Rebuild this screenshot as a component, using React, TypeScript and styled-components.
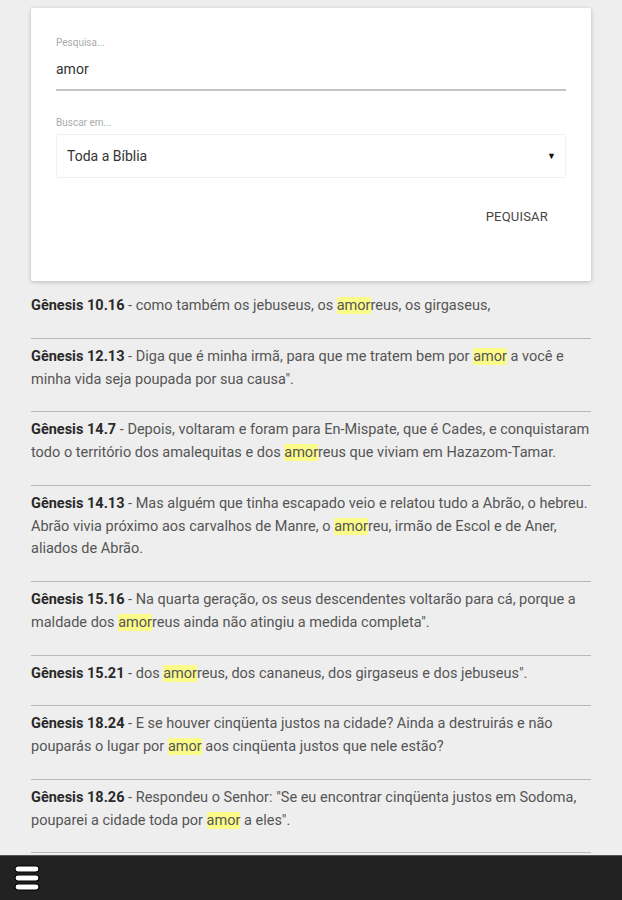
import React from "react";
import styled, { createGlobalStyle } from "styled-components";

const GlobalStyle = createGlobalStyle`
  html, body {
    margin: 0;
    padding: 0;
    background-color: #eeeeee;
    font-family: Roboto, "Liberation Sans", Arial, sans-serif;
  }
`;

const Page = styled.div`
  padding: 8px 31px 60px;
  display: flex;
  flex-direction: column;
`;

const Card = styled.div`
  background-color: #fff;
  box-shadow: 0 1px 4px 0 rgb(0 0 0 / 22%);
  border-radius: 2px;
  padding: 29px 25px 56px;
  display: flex;
  flex-direction: column;
`;

const Label = styled.label`
  font-size: 10px;
  color: #aaa;
  line-height: 12px;
`;

const SearchInput = styled.input`
  border: none;
  outline: none;
  border-bottom: 2px solid #c4c4c4;
  font-family: inherit;
  font-size: 14px;
  color: #333;
  padding: 12px 0 12px;
  margin-bottom: 26px;
  background: transparent;
`;

const SelectBox = styled.div`
  margin-top: 5px;
  height: 42px;
  border: 1px solid #f1f1f1;
  border-radius: 2px;
  display: flex;
  align-items: center;
  justify-content: space-between;
  padding: 0 9px 0 10px;
  font-size: 14px;
  color: #333;

  span.arrow {
    font-size: 9px;
    color: #111;
  }
`;

const Actions = styled.div`
  display: flex;
  justify-content: flex-end;
  padding: 31px 18px 0 0;
`;

const FlatButton = styled.button`
  border: none;
  background: none;
  font-family: inherit;
  font-size: 13px;
  letter-spacing: 0.2px;
  color: #444;
  padding: 0;
  text-transform: uppercase;
  line-height: 16px;
`;

const ResultList = styled.ul`
  list-style: none;
  margin: 7px 0 0;
  padding: 0;
`;

const ResultItem = styled.li`
  padding: 7px 0 20px;
  font-size: 14.5px;
  line-height: 22.75px;
  color: #555;
  border-bottom: 1.5px solid #b8b8b8;

  b {
    color: #2a2a2a;
    font-weight: 700;
  }
`;

const Mark = styled.mark`
  background-color: #fbfb8a;
  color: inherit;
`;

const BottomBar = styled.nav`
  position: fixed;
  left: 0;
  right: 0;
  bottom: 0;
  height: 44px;
  background-color: #222;
  border-top: 1px solid #555;
  display: flex;
  align-items: center;
  padding-left: 14px;
`;

const MenuIcon = () => (
  <svg width="26" height="26" viewBox="0 0 26 26">
    {[1, 10, 19].map((y) => (
      <rect
        key={y}
        x="1"
        y={y}
        width="24"
        height="6"
        rx="3"
        fill="#fff"
        stroke="#000"
        strokeWidth="1.2"
      />
    ))}
  </svg>
);

const results: { ref: string; parts: string[] }[] = [
  { ref: "Gênesis 10.16", parts: ["como também os jebuseus, os ", "amor", "reus, os girgaseus,"] },
  { ref: "Gênesis 12.13", parts: ["Diga que é minha irmã, para que me tratem bem por ", "amor", " a você e minha vida seja poupada por sua causa\"."] },
  { ref: "Gênesis 14.7", parts: ["Depois, voltaram e foram para En-Mispate, que é Cades, e conquistaram todo o território dos amalequitas e dos ", "amor", "reus que viviam em Hazazom-Tamar."] },
  { ref: "Gênesis 14.13", parts: ["Mas alguém que tinha escapado veio e relatou tudo a Abrão, o hebreu. Abrão vivia próximo aos carvalhos de Manre, o ", "amor", "reu, irmão de Escol e de Aner, aliados de Abrão."] },
  { ref: "Gênesis 15.16", parts: ["Na quarta geração, os seus descendentes voltarão para cá, porque a maldade dos ", "amor", "reus ainda não atingiu a medida completa\"."] },
  { ref: "Gênesis 15.21", parts: ["dos ", "amor", "reus, dos cananeus, dos girgaseus e dos jebuseus\"."] },
  { ref: "Gênesis 18.24", parts: ["E se houver cinqüenta justos na cidade? Ainda a destruirás e não pouparás o lugar por ", "amor", " aos cinqüenta justos que nele estão?"] },
  { ref: "Gênesis 18.26", parts: ["Respondeu o Senhor: \"Se eu encontrar cinqüenta justos em Sodoma, pouparei a cidade toda por ", "amor", " a eles\"."] },
];

export default function App() {
  return (
    <>
      <GlobalStyle />
      <Page>
        <Card>
          <Label>Pesquisa...</Label>
          <SearchInput defaultValue="amor" />
          <Label>Buscar em...</Label>
          <SelectBox>
            <span>Toda a Bíblia</span>
            <span className="arrow">▼</span>
          </SelectBox>
          <Actions>
            <FlatButton>Pequisar</FlatButton>
          </Actions>
        </Card>
        <ResultList>
          {results.map((r) => (
            <ResultItem key={r.ref}>
              <b>{r.ref}</b> - {r.parts[0]}
              <Mark>{r.parts[1]}</Mark>
              {r.parts[2]}
            </ResultItem>
          ))}
        </ResultList>
      </Page>
      <BottomBar>
        <MenuIcon />
      </BottomBar>
    </>
  );
}
